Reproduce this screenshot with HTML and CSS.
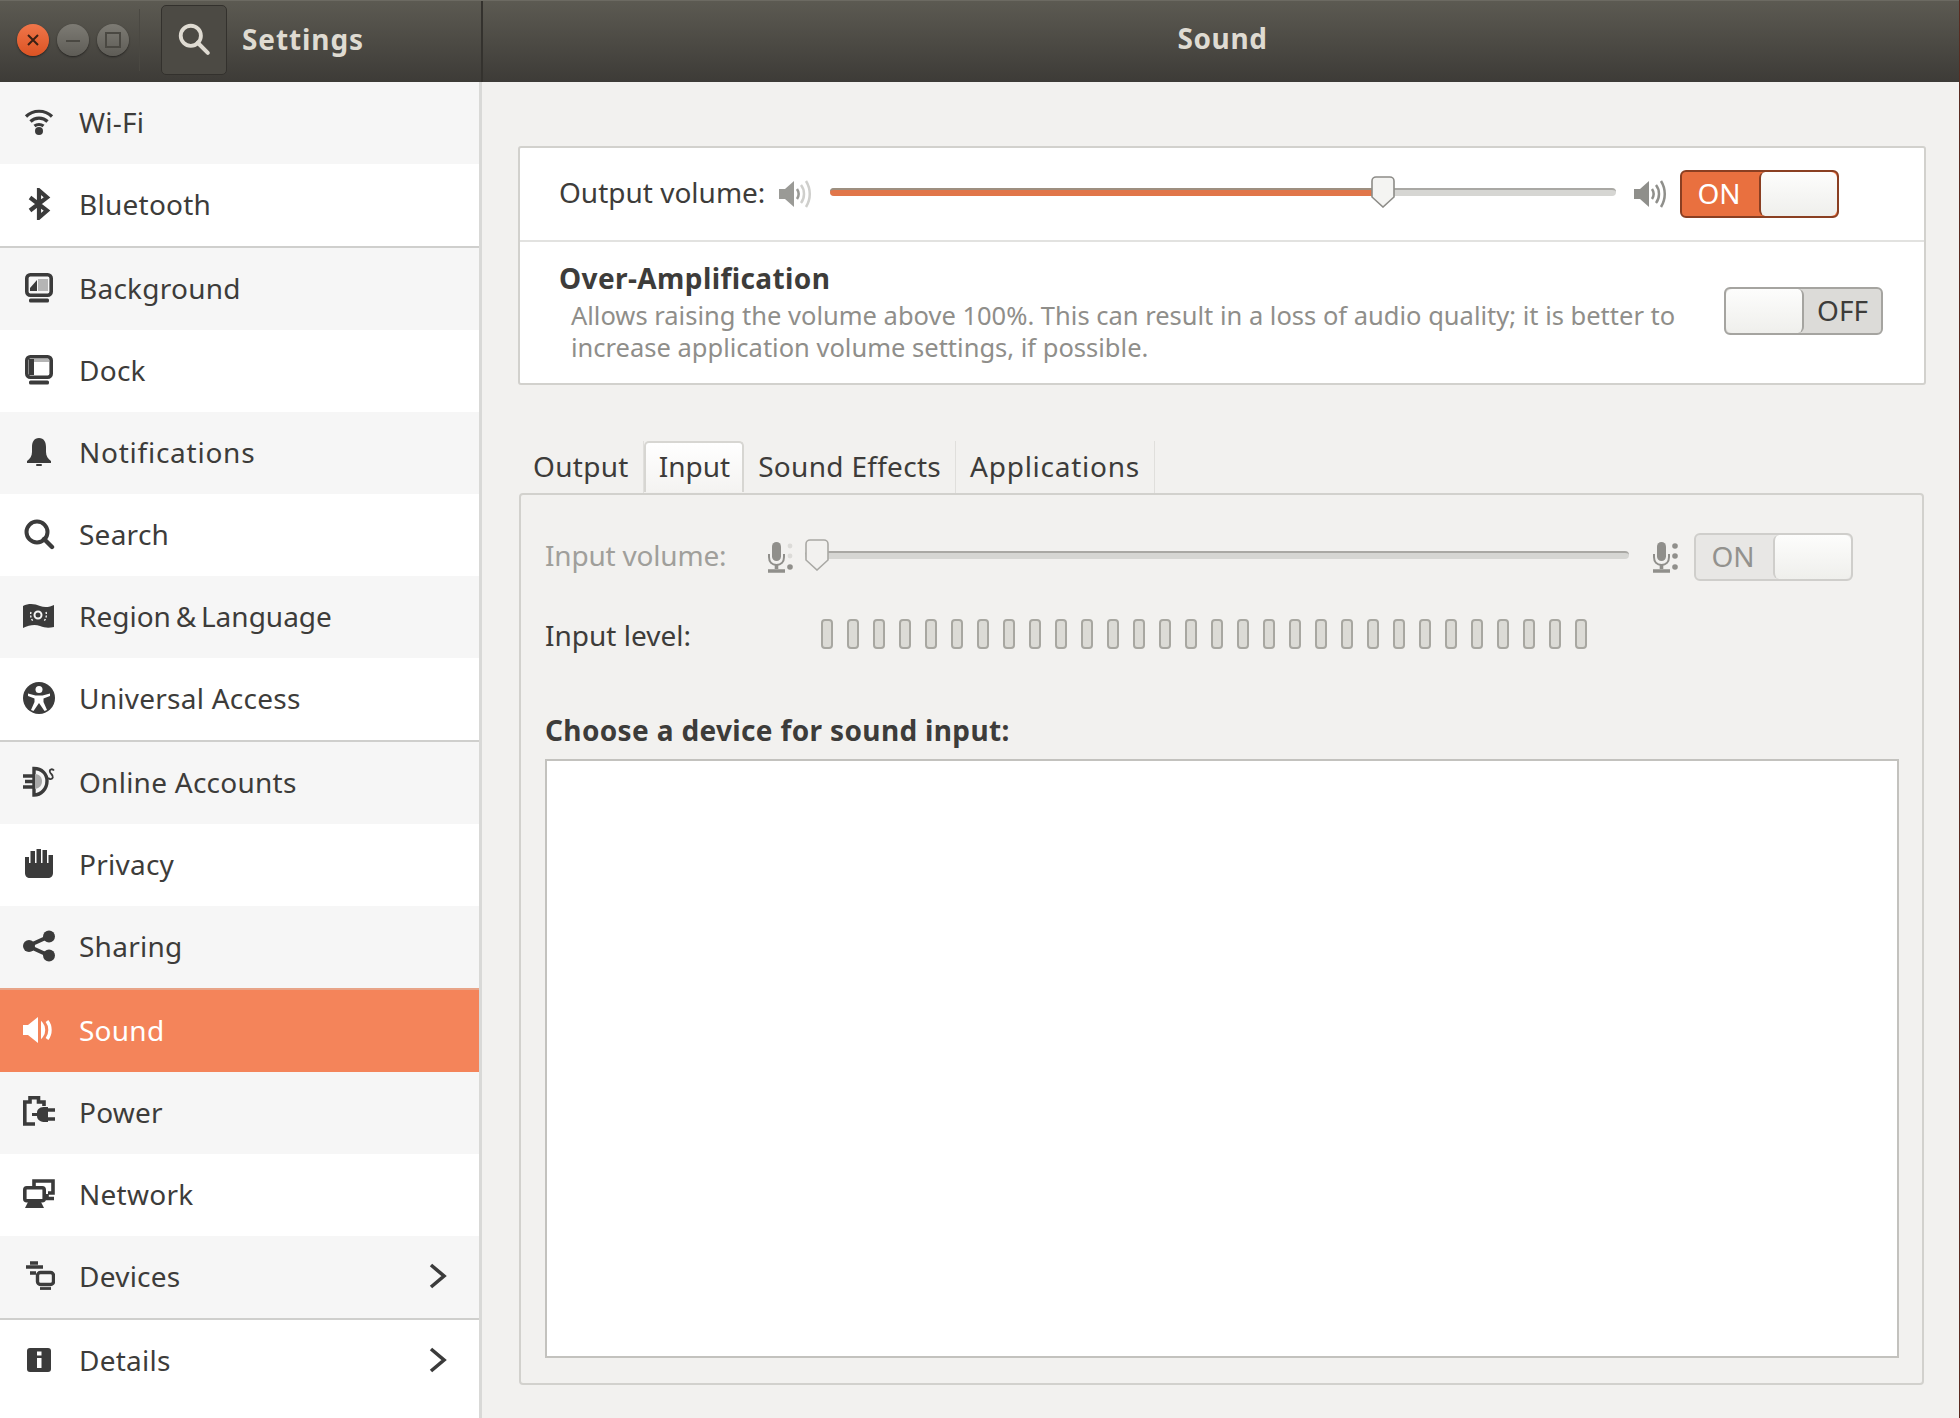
FILE: index.html
```html
<!DOCTYPE html>
<html lang="en">
<head>
    <meta charset="UTF-8">
    <title>Sound</title>
    <link rel="stylesheet" href="styles.css">
</head>
<body>

<header class="titlebar">
    <div class="titlebar-left">
        <div class="win-btn win-close"><svg viewBox="0 0 32 32"><path d="M11 11l10 10M21 11l-10 10" stroke="#3a2014" stroke-width="2" fill="none"/></svg></div>
        <div class="win-btn win-min"><svg viewBox="0 0 32 32"><path d="M9 17h14" stroke="#4a4842" stroke-width="2" fill="none"/></svg></div>
        <div class="win-btn win-max"><svg viewBox="0 0 32 32"><rect x="9" y="9" width="14" height="14" stroke="#4a4842" stroke-width="2" fill="none"/></svg></div>
        <div class="title-sep"></div>
        <div class="search-btn"><svg viewBox="0 0 32 32"><circle cx="13" cy="13" r="9.500" stroke="#dfdbd2" stroke-width="3.600" fill="none"/><path d="M19.500 19.500L29 29" stroke="#dfdbd2" stroke-width="3.800" stroke-linecap="round"/></svg></div>
        <div class="title-settings">Settings</div>
    </div>
    <div class="title-sound">Sound</div>
</header>

<div class="app">
    <aside class="sidebar">
        <div class="row alt"><svg class="icon" viewBox="0 0 32 32"><g fill="none" stroke="#3b3b3b" stroke-width="3.200"><path d="M3 10.500C10 3.500 22 3.500 29 10.500"/><path d="M7.500 15.500C12 11 20 11 24.500 15.500"/><path d="M11.500 20C14 18 18 18 20.500 20"/></g><circle cx="16" cy="25" r="4" fill="#3b3b3b"/></svg><span>Wi-Fi</span></div>
        <div class="row"><svg class="icon" viewBox="0 0 32 32"><path d="M7 9.500L24 22.500L16 29.500V2.500L24 9.500L7 22.500" fill="none" stroke="#3b3b3b" stroke-width="4.200"/></svg><span>Bluetooth</span></div>
        <div class="divider"></div>
        <div class="row alt"><svg class="icon" viewBox="0 0 32 32"><rect x="3.800" y="2.800" width="24.400" height="20.400" rx="3.500" fill="none" stroke="#3b3b3b" stroke-width="3.600"/><path d="M7 19V16L14 8V19Z" fill="#3b3b3b"/><rect x="15" y="7" width="10" height="12" fill="#b5b5b5"/><rect x="6" y="26.500" width="20" height="4" rx="1.500" fill="#3b3b3b"/></svg><span>Background</span></div>
        <div class="row"><svg class="icon" viewBox="0 0 32 32"><rect x="3.800" y="2.800" width="24.400" height="20.400" rx="3.500" fill="none" stroke="#3b3b3b" stroke-width="3.600"/><rect x="6" y="5" width="5" height="16" fill="#3b3b3b"/><rect x="11" y="5" width="15" height="3" fill="#b5b5b5"/><rect x="6" y="26.500" width="20" height="4" rx="1.500" fill="#3b3b3b"/></svg><span>Dock</span></div>
        <div class="row alt"><svg class="icon" viewBox="0 0 32 32"><path d="M16 2C11 2 9 6 9 11V16C9 20 7 23 4 25V27H28V25C25 23 23 20 23 16V11C23 6 21 2 16 2Z" fill="#3b3b3b"/><rect x="13" y="28" width="6" height="2" rx="1" fill="#3b3b3b"/></svg><span class="ls-wide">Notifications</span></div>
        <div class="row"><svg class="icon" viewBox="0 0 32 32"><circle cx="14" cy="14" r="10.500" fill="none" stroke="#3b3b3b" stroke-width="4"/><path d="M21 21L29 29" stroke="#3b3b3b" stroke-width="4.400" stroke-linecap="round"/></svg><span>Search</span></div>
        <div class="row alt"><svg class="icon" viewBox="0 0 32 32"><path d="M0 6C6 3 12 4 17 6C22 8 27 7 31 5V27C26 28 22 28 17 26C12 24 6 25 0 28Z" fill="#3b3b3b"/><circle cx="15" cy="15" r="3.500" fill="none" stroke="#f6f6f6" stroke-width="2"/><path d="M8 12C7 15 8 19 10 21M23 12C24 15 23 19 21 21" fill="none" stroke="#f6f6f6" stroke-width="1.400" stroke-dasharray="2 1.500"/></svg><span class="ws-tight">Region &amp; Language</span></div>
        <div class="row"><svg class="icon" viewBox="0 0 32 32"><circle cx="16" cy="16" r="16" fill="#3b3b3b"/><circle cx="16" cy="7.500" r="3.500" fill="#fff"/><path d="M5 11.500L12.500 13.500H19.500L27 11.500V14L20.500 16.500V20L24 28L21.500 29L16 21L10.500 29L8 28L11.500 20V16.500L5 14Z" fill="#fff"/></svg><span>Universal Access</span></div>
        <div class="divider"></div>
        <div class="row alt"><svg class="icon" viewBox="0 0 32 32"><path d="M11 2.500C19 2.500 24 8 24 15C24 23 18 29 11 29V2.500Z" fill="none" stroke="#3b3b3b" stroke-width="3.400"/><path d="M12 8C17 8 19 12 19 15C19 19 17 22 12 23Z" fill="#a9a9a9"/><path d="M0 10H11M2 15.500H11M0 21H11" stroke="#3b3b3b" stroke-width="3.400"/><path d="M31 4.500C29.500 2.500 26.500 3 26.800 5.500C27.100 8 30.500 8.500 29.800 11.500C29.300 13.500 26.500 13.500 25 12" fill="none" stroke="#3b3b3b" stroke-width="1.800"/></svg><span>Online Accounts</span></div>
        <div class="row"><svg class="icon" viewBox="0 0 32 32"><path d="M2 9H6V15H7.500V3H12V15H13.500V1H18V15H19.500V2H24V15H25.500V7H30V25C30 28 28 30 25 30H7C4 30 2 28 2 25Z" fill="#3b3b3b"/></svg><span>Privacy</span></div>
        <div class="row alt"><svg class="icon" viewBox="0 0 32 32"><path d="M27 6L5 16L27 26" fill="none" stroke="#3b3b3b" stroke-width="3.800"/><circle cx="26" cy="6.500" r="6" fill="#3b3b3b"/><circle cx="6" cy="16" r="6" fill="#3b3b3b"/><circle cx="26" cy="25.500" r="6" fill="#3b3b3b"/></svg><span>Sharing</span></div>
        <div class="divider sound-top"></div>
        <div class="row selected"><svg class="icon" viewBox="0 0 32 32"><path d="M0 11H5L15 3V29L5 21H0Z" fill="#fff"/><path d="M19 9.500C22 13 22 19 19 22.500V9.500Z" fill="#fff" stroke="#fff" stroke-width="2"/><path d="M24 7C28 12 28 20 24 25" fill="none" stroke="#fff" stroke-width="3.400"/></svg><span>Sound</span></div>
        <div class="row alt"><svg class="icon" viewBox="0 0 32 32"><path d="M12 28H1.800V6H7V1.800H15.500V6H21V10" fill="none" stroke="#3b3b3b" stroke-width="3.600"/><path d="M14 17C14 12 18 11 22 11H25V26H22C18 26 14 24 14 20H9V17Z" fill="#3b3b3b"/><path d="M25 14H32M25 23H32" stroke="#3b3b3b" stroke-width="3.600"/></svg><span>Power</span></div>
        <div class="row"><svg class="icon" viewBox="0 0 32 32"><path d="M11 8V3H30V15H25" fill="none" stroke="#3b3b3b" stroke-width="3.600"/><rect x="1.800" y="9.800" width="19.400" height="13" rx="2" fill="none" stroke="#3b3b3b" stroke-width="3.600"/><path d="M5 24H18L21 30H2Z" fill="#3b3b3b"/><path d="M24 16V20.500H31" fill="none" stroke="#3b3b3b" stroke-width="3.600"/></svg><span>Network</span></div>
        <div class="row alt"><svg class="icon" viewBox="0 0 32 32"><path d="M3 7H20M7 3H15M7 13H13" stroke="#3b3b3b" stroke-width="3.400"/><rect x="14.500" y="12.500" width="16" height="12" rx="3" fill="none" stroke="#3b3b3b" stroke-width="3.400"/><path d="M17 28.500H28" stroke="#3b3b3b" stroke-width="2.800"/></svg><span>Devices</span><svg class="chevron" viewBox="0 0 20 26"><path d="M3 2L16 13L3 24" fill="none" stroke="#3b3b3b" stroke-width="3.600"/></svg></div>
        <div class="divider"></div>
        <div class="row"><svg class="icon" viewBox="0 0 32 32"><rect x="4" y="4" width="24" height="24" rx="3" fill="#3b3b3b"/><rect x="14" y="7.500" width="4.500" height="4" fill="#fff"/><rect x="14" y="14" width="4.500" height="10" fill="#fff"/></svg><span>Details</span><svg class="chevron" viewBox="0 0 20 26"><path d="M3 2L16 13L3 24" fill="none" stroke="#3b3b3b" stroke-width="3.600"/></svg></div>
    </aside>

    <main class="content">
        <section class="panel">
            <div class="output-row">
                <span class="output-label">Output volume:</span>
                <svg class="vol-icon vol-left" viewBox="0 0 33 32"><path d="M1 11H7L16 3V29L7 21H1Z" fill="#9a9a96"/><path d="M19 11C21 14 21 18 19 21" fill="none" stroke="#9a9a96" stroke-width="2.500"/><path d="M23 7C27 12 27 20 23 25M28 3C33 11 33 21 28 29" fill="none" stroke="#cfcfcc" stroke-width="2.500"/></svg>
                <div class="slider output-slider">
                    <div class="slider-fill" style="width: 70.4%"></div>
                    <svg class="thumb" style="left: 70.4%" viewBox="0 0 24 32"><path d="M1 5C1 2.500 3 1 5 1H19C21 1 23 2.500 23 5V21L12 31L1 21Z" fill="#f4f4f2" stroke="#8d8c88" stroke-width="1.600"/></svg>
                </div>
                <svg class="vol-icon vol-right" viewBox="0 0 33 32"><path d="M1 11H7L16 3V29L7 21H1Z" fill="#8f8f8b"/><path d="M19 11C21 14 21 18 19 21M23 7C27 12 27 20 23 25M28 3C33 11 33 21 28 29" fill="none" stroke="#8f8f8b" stroke-width="2.500"/></svg>
                <div class="switch switch-on"><span class="switch-label">ON</span><span class="switch-handle"></span></div>
            </div>
            <div class="amp-row">
                <div class="amp-text">
                    <div class="amp-title">Over-Amplification</div>
                    <p class="amp-desc">Allows raising the volume above 100%. This can result in a loss of audio quality; it is better to increase application volume settings, if possible.</p>
                </div>
                <div class="switch switch-off"><span class="switch-handle"></span><span class="switch-label">OFF</span></div>
            </div>
        </section>

        <nav class="tabs">
            <div class="tab tab-output">Output</div>
            <div class="tab tab-active">Input</div>
            <div class="tab tab-effects">Sound Effects</div>
            <div class="tab tab-apps">Applications</div>
        </nav>
        <section class="tab-panel">
            <div class="input-row">
                <span class="input-label">Input volume:</span>
                <svg class="mic mic-left" viewBox="0 0 28 32"><rect x="6" y="1" width="9" height="19" rx="4.500" fill="#908f8b"/><path d="M3 13V16C3 21 6 24 10.500 24C15 24 18 21 18 16V13" fill="none" stroke="#908f8b" stroke-width="2"/><path d="M10.500 24V28M2 30H19" stroke="#908f8b" stroke-width="3.600"/><circle cx="24" cy="5" r="2.400" fill="#dcdbd8"/><circle cx="24" cy="15" r="2.400" fill="#dcdbd8"/><circle cx="24" cy="26" r="2.800" fill="#908f8b"/></svg>
                <div class="slider input-slider">
                    <svg class="thumb thumb-disabled" viewBox="0 0 24 32"><path d="M1 5C1 2.500 3 1 5 1H19C21 1 23 2.500 23 5V21L12 31L1 21Z" fill="#f2f1ef" stroke="#a9a8a4" stroke-width="1.600"/></svg>
                </div>
                <svg class="mic mic-right" viewBox="0 0 28 32"><rect x="6" y="1" width="9" height="19" rx="4.500" fill="#908f8b"/><path d="M3 13V16C3 21 6 24 10.500 24C15 24 18 21 18 16V13" fill="none" stroke="#908f8b" stroke-width="2"/><path d="M10.500 24V28M2 30H19" stroke="#908f8b" stroke-width="3.600"/><circle cx="24" cy="5" r="2.800" fill="#908f8b"/><circle cx="24" cy="15" r="2.800" fill="#908f8b"/><circle cx="24" cy="26" r="2.800" fill="#908f8b"/></svg>
                <div class="switch switch-disabled"><span class="switch-label">ON</span><span class="switch-handle"></span></div>
            </div>
            <div class="level-row">
                <span class="level-label">Input level:</span>
                <div class="level-bars">
                    <i></i><i></i><i></i><i></i><i></i><i></i><i></i><i></i><i></i><i></i>
                    <i></i><i></i><i></i><i></i><i></i><i></i><i></i><i></i><i></i><i></i>
                    <i></i><i></i><i></i><i></i><i></i><i></i><i></i><i></i><i></i><i></i>
                </div>
            </div>
            <div class="device-title">Choose a device for sound input:</div>
            <div class="device-list"></div>
        </section>
    </main>
</div>

</body>
</html>
```
FILE: styles.css
```css
* {
    box-sizing: border-box;
}

body {
    margin: 0;
    height: 1418px;
    overflow: hidden;
    font-family: "Noto Sans", "Open Sans", sans-serif;
    font-size: 28px;
    color: #3d3c3a;
    background: #f2f1ef;
    border-right: 1px solid #5c2a20;
}

/* title bar */
.titlebar {
    height: 82px;
    display: flex;
    background: linear-gradient(#5c5a52, #3d3b37);
    border-top: 1px solid #6c6a62;
}

.titlebar-left {
    width: 483px;
    display: flex;
    align-items: center;
    padding: 0 0 4px 17px;
    border-right: 2px solid #34322e;
}

.win-btn {
    width: 32px;
    height: 32px;
    margin-right: 8px;
    border-radius: 50%;
    background: linear-gradient(#7d7b74, #5e5c56);
    box-shadow: 0 1px 2px rgba(0, 0, 0, 0.5);
}

.win-btn svg {
    display: block;
}

.win-close {
    background: linear-gradient(#f0764a, #dc5323);
}

.title-sep {
    width: 1px;
    height: 62px;
    margin-left: 2px;
    background: #4a4842;
}

.search-btn {
    width: 66px;
    height: 70px;
    margin-left: 21px;
    padding: 16px 15px;
    border: 1px solid #33312d;
    border-radius: 5px;
    background: #4c4a44;
}

.search-btn svg {
    display: block;
    width: 34px;
    height: 34px;
}

.title-settings {
    margin-left: 15px;
    padding-bottom: 2px;
    font-weight: 700;
    font-size: 28px;
    letter-spacing: 0.9px;
    color: #dfdbd2;
}

.title-sound {
    flex: 1;
    padding-left: 3px;
    text-align: center;
    line-height: 75px;
    font-weight: 700;
    font-size: 28px;
    letter-spacing: 0.6px;
    color: #dfdbd2;
}

.app {
    display: flex;
    height: 1336px;
}

/* sidebar */
.sidebar {
    width: 482px;
    flex-shrink: 0;
    background: #fff;
    border-right: 3px solid #d9d9d7;
}

.row {
    height: 82px;
    display: flex;
    align-items: center;
    padding: 0 0 3px 23px;
    letter-spacing: 0.25px;
    color: #3d3c3a;
}

.row.alt {
    background: #f6f6f6;
}

.row.selected {
    background: #f4845a;
    color: #fff;
}

.row span {
    margin-left: 24px;
}

.row .ls-wide {
    letter-spacing: 0.75px;
}

.row .ws-tight {
    word-spacing: -2.5px;
    letter-spacing: 0;
}

.icon {
    width: 32px;
    height: 32px;
    flex-shrink: 0;
}

.chevron {
    width: 20px;
    height: 26px;
    margin-left: auto;
    margin-right: 31px;
}

.divider {
    height: 2px;
    background: #cfcfcd;
}

.sound-top {
    background: #e8a488;
}

/* main area */
.content {
    flex: 1;
    padding: 64px 33px 0 36px;
}

.panel {
    height: 239px;
    background: #fff;
    border: 2px solid #d2d1cd;
    border-radius: 3px;
}

.output-row {
    height: 94px;
    display: flex;
    align-items: center;
    padding-left: 39px;
    border-bottom: 2px solid #e2e2e0;
}

.output-label {
    width: 219px;
    padding-bottom: 5px;
}

.vol-icon {
    width: 33px;
    height: 32px;
    flex-shrink: 0;
}

.slider {
    position: relative;
    height: 8px;
    margin-top: -4px;
    border-radius: 4px;
    background: #d6d6d3;
    border-top: 2px solid #a9a8a4;
}

.output-slider {
    width: 786px;
    margin-left: 19px;
}

.slider-fill {
    height: 8px;
    margin-top: -2px;
    border-radius: 4px;
    background: #e1764a;
    border-top: 2px solid #9d8f80;
}

.thumb {
    position: absolute;
    top: -14px;
    width: 24px;
    height: 32px;
    margin-left: -12px;
}

.vol-right {
    margin-left: 17px;
}

/* switches */
.switch {
    display: flex;
    width: 159px;
    height: 48px;
    border-radius: 6px;
    overflow: hidden;
    font-size: 28px;
    line-height: 43px;
    text-align: center;
}

.switch-label {
    flex: 1;
}

.switch-handle {
    width: 78px;
    background: linear-gradient(#fdfdfc, #efefec);
}

.switch-on {
    margin-left: 14px;
    background: #e9703f;
    border: 2px solid #8a3f22;
    color: #fff;
}

.switch-on .switch-label {
    padding-right: 3px;
}

.switch-on .switch-handle {
    border-left: 2px solid #8a3f22;
    border-radius: 6px;
}

.switch-off {
    margin: -3px 41px 0 0;
    background: #dcdbd8;
    border: 2px solid #a5a4a0;
}

.switch-off .switch-handle {
    border-right: 2px solid #a5a4a0;
    border-radius: 6px;
}

.switch-disabled {
    margin-left: 15px;
    background: #e8e7e5;
    border: 2px solid #cfcecb;
    color: #93928e;
}

.switch-disabled .switch-label {
    padding-right: 3px;
}

.switch-disabled .switch-handle {
    border-left: 2px solid #cfcecb;
    border-radius: 6px;
}

/* over-amplification */
.amp-row {
    display: flex;
    align-items: center;
    justify-content: space-between;
    height: 141px;
    padding-left: 39px;
}

.amp-text {
    margin-top: -4px;
}

.amp-title {
    font-weight: 700;
    line-height: 38px;
    margin-bottom: 2px;
    letter-spacing: 0.4px;
}

.amp-desc {
    width: 1130px;
    margin: 0;
    padding-left: 12px;
    font-size: 25.5px;
    line-height: 32px;
    color: #8f8e8a;
}

/* tabs */
.tabs {
    display: flex;
    height: 52px;
    margin-top: 56px;
    padding-left: 1px;
    letter-spacing: 0.3px;
}

.tab {
    padding: 6px 14px 0;
    border-right: 1px solid #e0dfdc;
}

.tab-apps {
    letter-spacing: 0.75px;
}

.tab-active {
    padding: 4px 12px 0 13px;
    margin-bottom: 1px;
    letter-spacing: 0;
    background: linear-gradient(#fff, #f4f3f1);
    border: 2px solid #d7d6d2;
    border-bottom: none;
    border-radius: 5px 5px 0 0;
}

/* input tab */
.tab-panel {
    height: 892px;
    margin: 0 2px 0 1px;
    padding: 38px 23px 0 24px;
    border: 2px solid #d2d1cd;
    border-radius: 4px;
}

.input-row {
    display: flex;
    align-items: center;
    height: 48px;
}

.input-label {
    width: 221px;
    margin-top: -4px;
    letter-spacing: -0.2px;
    color: #a09f9b;
}

.mic {
    width: 28px;
    height: 32px;
    flex-shrink: 0;
}

.input-slider {
    width: 824px;
    margin-left: 11px;
    margin-top: -5px;
}

.thumb-disabled {
    left: 0;
    margin-left: 0;
}

.mic-right {
    margin-left: 22px;
}

.level-row {
    display: flex;
    align-items: center;
    height: 30px;
    margin-top: 38px;
}

.level-label {
    width: 276px;
    margin-top: 2px;
}

.level-bars {
    display: flex;
    gap: 14px;
}

.level-bars i {
    display: block;
    width: 12px;
    height: 30px;
    border: 2px solid #a8a7a1;
    border-radius: 4px;
    background: #dcdbd6;
}

.device-title {
    margin-top: 63px;
    font-weight: 700;
    line-height: 36px;
    letter-spacing: 0.35px;
}

.device-list {
    height: 599px;
    margin-top: 11px;
    background: #fff;
    border: 2px solid #c3c2be;
}
```
